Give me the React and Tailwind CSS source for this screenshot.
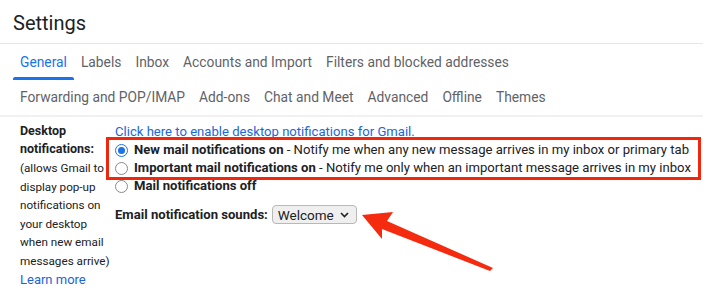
import React from "react";

const tabs1 = ["General", "Labels", "Inbox", "Accounts and Import", "Filters and blocked addresses"];
const tabs2 = ["Forwarding and POP/IMAP", "Add-ons", "Chat and Meet", "Advanced", "Offline", "Themes"];

function Radio({ checked }) {
  return checked ? (
    <span className="w-[13px] h-[13px] rounded-full border-[1.5px] border-[#1a73e8] flex items-center justify-center shrink-0">
      <span className="w-[7px] h-[7px] rounded-full bg-[#1a73e8]" />
    </span>
  ) : (
    <span className="w-[13px] h-[13px] rounded-full border border-[#8a8a8a] bg-white shrink-0" />
  );
}

export default function App() {
  return (
    <div className="relative w-[713px] h-[293px] bg-white overflow-hidden font-['Roboto',sans-serif] text-[#202124]">
      <div className="w-[703px]">
        <div className="h-[44px] pl-[13px] pt-[2px] flex items-center border-b border-[#e6e6e6]">
          <span className="text-[20px] text-[#202124] leading-none">Settings</span>
        </div>
        <div className="h-[36px] pl-[13px] flex items-stretch text-[13.8px] text-[#5f6368]">
          {tabs1.map((t, i) => (
            <div key={t} className={"px-[7px] pt-[1px] flex items-center relative whitespace-nowrap " + (i === 0 ? "text-[#1a73e8]" : "")}>
              {t}
              {i === 0 && <span className="absolute left-0 right-0 bottom-0 h-[3px] bg-[#1a73e8] rounded-t-[2px]" />}
            </div>
          ))}
        </div>
        <div className="h-[37px] pl-[13px] flex items-center text-[13.8px] text-[#5f6368] border-b-2 border-[#f1f1f1]">
          {tabs2.map((t) => (
            <div key={t} className="px-[7px] whitespace-nowrap">{t}</div>
          ))}
        </div>
      </div>
      <div className="flex pt-[5px] whitespace-nowrap">
        <div className="pl-[20px] w-[115px] shrink-0">
          <div className="text-[12.5px] font-bold leading-[18px]">Desktop</div>
          <div className="text-[12.5px] font-bold leading-[18px]">notifications:</div>
          <div className="text-[11.7px] leading-[18.6px] mt-[1px]">
            <div>(allows Gmail to</div>
            <div>display pop-up</div>
            <div>notifications on</div>
            <div>your desktop</div>
            <div>when new email</div>
            <div>messages arrive)</div>
          </div>
          <div className="text-[13px] leading-[18px] text-[#1a66d9]">Learn more</div>
        </div>
        <div className="flex flex-col text-[13.1px] leading-[18px] pt-[1px]">
          <div className="text-[#1a66d9] underline">Click here to enable desktop notifications for Gmail.</div>
          <div className="flex items-center gap-[6px]">
            <Radio checked />
            <span><b>New mail notifications on</b> - Notify me when any new message arrives in my inbox or primary tab</span>
          </div>
          <div className="flex items-center gap-[6px]">
            <Radio />
            <span><b>Important mail notifications on</b> - Notify me only when an important message arrives in my inbox</span>
          </div>
          <div className="flex items-center gap-[6px]">
            <Radio />
            <b>Mail notifications off</b>
          </div>
          <div className="flex items-center gap-[4px] mt-[10px]">
            <b>Email notification sounds:</b>
            <div className="h-[19px] w-[85px] rounded-[4px] border border-[#b8b8b8] bg-[#efefef] flex items-center justify-between pl-[5px] pr-[7px] text-[13.5px]">
              <span>Welcome</span>
              <svg width="9" height="6" viewBox="0 0 9 6"><path d="M1 1l3.5 3.5L8 1" fill="none" stroke="#222" strokeWidth="1.6" /></svg>
            </div>
          </div>
        </div>
      </div>
      <div className="absolute left-[106px] top-[137px] w-[595px] h-[43px] border-[3px] border-[#f1260c]" />
      <svg className="absolute left-0 top-0" width="713" height="293" viewBox="0 0 713 293">
        <polygon points="362,215 393,212 387,221 493,268 490,271 382,229 382,239" fill="#f42b0e" />
      </svg>
    </div>
  );
}
